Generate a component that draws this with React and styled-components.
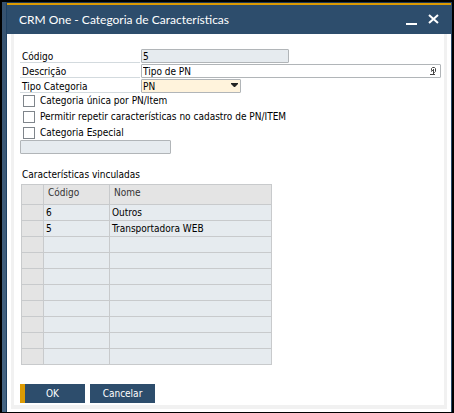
import React, { useState } from "react";
import styled, { createGlobalStyle } from "styled-components";

const GlobalStyle = createGlobalStyle`
  * {
    box-sizing: border-box;
  }

  body {
    margin: 0;
    background: #000;
    color: #000;
    font-family: "DejaVu Sans Condensed", "DejaVu Sans", sans-serif;
    font-size: 10px;
    line-height: 16px;
  }

  button,
  input,
  select {
    font: inherit;
    color: inherit;
  }
`;

const Window = styled.div`
  display: flex;
  min-height: 100vh;
  padding: 2px;
`;

const LeftEdge = styled.div`
  width: 5px;
  background: linear-gradient(#36526f, #456482);
  border-right: 1px solid #1f4163;
`;

const Frame = styled.div`
  flex: 1;
  min-width: 0;
  display: flex;
  flex-direction: column;
  border-top: 1px solid #1f3b57;
  border-right: 1px solid #2b4b6b;
`;

const TitleBar = styled.header`
  display: flex;
  align-items: center;
  justify-content: space-between;
  height: 31px;
  padding: 0 12px;
  background: #2d4d6c;
  border-top: 2px solid #dc9b04;
`;

const Title = styled.h1`
  margin: 0;
  color: #fff;
  font-family: Lato, sans-serif;
  font-size: 12px;
  font-weight: 400;
  line-height: 16px;
`;

const WindowButtons = styled.div`
  display: flex;
  gap: 10px;
`;

const IconButton = styled.button`
  display: flex;
  padding: 0;
  border: none;
  background: transparent;
  color: #fff;
`;

const Body = styled.main`
  flex: 1;
  padding: 0 4px 3px;
  background: #fff;
  display: flex;
`;

const Form = styled.form`
  flex: 1;
  min-width: 0;
  padding: 15px 3px 2px 6px;
  border: solid #f1f1f1;
  border-width: 0 3px 4px;
`;

const Fields = styled.div`
  display: flex;
  flex-direction: column;
  gap: 1px;
`;

const FieldRow = styled.div`
  display: flex;
  gap: 1px;
`;

const FieldLabel = styled.label`
  width: 120px;
  height: 14px;
  padding-left: 2px;
  border-bottom: 1px solid #d3dade;
`;

const TextInput = styled.input`
  width: ${(props) => props.$width || "100%"};
  height: 14px;
  padding: 1px 1px 0;
  border: 1px solid #b1b5b8;
  border-radius: 1px;
  background: ${(props) => (props.readOnly ? "#e6ebef" : "#fff")};
  outline: none;
`;

const InputWrapper = styled.div`
  flex: 1;
  display: flex;
  align-items: center;
  height: 14px;
  padding-right: 3px;
  border: 1px solid #b1b5b8;
  border-radius: 1px;

  ${TextInput} {
    flex: 1;
    min-width: 0;
    height: 12px;
    border: none;
  }
`;

const SelectWrapper = styled.div`
  display: grid;
  align-items: center;
  width: 100px;
  height: 14px;
  border: 1px solid #b1b5b8;
  border-radius: 1px;
  background: #fff3dc;

  > * {
    grid-area: 1 / 1;
  }

  > svg {
    justify-self: end;
    margin-right: 2px;
    pointer-events: none;
  }
`;

const Select = styled.select`
  width: 100%;
  height: 12px;
  padding: 1px 1px 0;
  border: none;
  background: transparent;
  line-height: 12px;
  appearance: none;
  outline: none;
`;

const Checks = styled.div`
  display: flex;
  flex-direction: column;
  gap: 1px;
  padding: 0 3px;
`;

const CheckLabel = styled.label`
  display: flex;
  align-items: center;
  gap: 5px;
  height: 15px;
`;

const Checkbox = styled.input`
  width: 12px;
  height: 12px;
  margin: 0;
  border: 1px solid #7f858b;
  background: #fff;
  appearance: none;

  &:checked {
    background: #2d4d6c;
  }
`;

const Grid = styled.table`
  width: 251px;
  margin: 13px 0 0 1px;
  border-collapse: collapse;
  table-layout: fixed;

  caption {
    padding: 0 0 1px 1px;
    text-align: left;
  }

  th,
  td {
    height: 16px;
    padding: 1px 2px 0;
    border: 1px solid #c8cacc;
    background: #e6ebef;
    line-height: 14px;
    text-align: left;
  }

  th {
    background: #e4e4e4;
    color: #333;
    font-weight: 400;
  }

  thead th {
    height: 20px;
    padding: 0 4px 3px;
  }
`;

const Footer = styled.footer`
  display: flex;
  gap: 5px;
  margin-top: 19px;
`;

const Button = styled.button`
  width: 65px;
  height: 19px;
  padding: ${(props) => (props.$primary ? "0 5px 0 0" : "0")};
  border: none;
  border-left: ${(props) => (props.$primary ? "5px solid #dc9b04" : "none")};
  background: #2d4d6c;
  color: #fff;
`;

const records = [
  { codigo: 6, nome: "Outros" },
  { codigo: 5, nome: "Transportadora WEB" },
];
const ROW_COUNT = 10;

const options = [
  "Categoria única por PN/Item",
  "Permitir repetir características no cadastro de PN/ITEM",
  "Categoria Especial",
];

function App() {
  const [descricao, setDescricao] = useState("Tipo de PN");
  const rows = Array.from({ length: ROW_COUNT }, (_, i) => records[i] || {});

  return (
    <>
      <GlobalStyle />
      <Window>
        <LeftEdge />
        <Frame>
          <TitleBar>
            <Title>CRM One - Categoria de Características</Title>
            <WindowButtons>
              <IconButton aria-label="Minimizar">
                <svg width="13" height="12" viewBox="0 0 13 12">
                  <path d="M1 9h11v2H1z" fill="currentColor" />
                </svg>
              </IconButton>
              <IconButton aria-label="Fechar">
                <svg width="11" height="12" viewBox="0 0 11 12">
                  <path d="M1 1l9 8M10 1l-9 8" stroke="currentColor" strokeWidth="2" />
                </svg>
              </IconButton>
            </WindowButtons>
          </TitleBar>
          <Body>
            <Form onSubmit={(e) => e.preventDefault()}>
              <Fields>
                <FieldRow>
                  <FieldLabel htmlFor="codigo">Código</FieldLabel>
                  <TextInput id="codigo" $width="148px" value="5" readOnly />
                </FieldRow>
                <FieldRow>
                  <FieldLabel htmlFor="descricao">Descrição</FieldLabel>
                  <InputWrapper>
                    <TextInput
                      id="descricao"
                      value={descricao}
                      onChange={(e) => setDescricao(e.target.value)}
                    />
                    <svg width="7" height="10" viewBox="0 0 7 10" fill="none" stroke="#444">
                      <path d="M1.5 4.5v-2l1-1h2l1 1v3l-1 1h-1" />
                      <path d="M3.5 3v5M1 5.5l3-2M0 8.5h5" />
                    </svg>
                  </InputWrapper>
                </FieldRow>
                <FieldRow>
                  <FieldLabel htmlFor="tipo">Tipo Categoria</FieldLabel>
                  <SelectWrapper>
                    <Select id="tipo">
                      <option>PN</option>
                    </Select>
                    <svg width="8" height="6" viewBox="0 0 8 6">
                      <path d="M1 0h7v1L5 4H4L1 1z" fill="#222" />
                    </svg>
                  </SelectWrapper>
                </FieldRow>
              </Fields>
              <Checks>
                {options.map((option) => (
                  <CheckLabel key={option}>
                    <Checkbox type="checkbox" />
                    {option}
                  </CheckLabel>
                ))}
              </Checks>
              <FieldRow>
                <TextInput $width="151px" aria-label="Categoria Especial" readOnly />
              </FieldRow>
              <Grid>
                <caption>Características vinculadas</caption>
                <colgroup>
                  <col width="22" />
                  <col width="66" />
                  <col />
                </colgroup>
                <thead>
                  <tr>
                    <th />
                    <th>Código</th>
                    <th>Nome</th>
                  </tr>
                </thead>
                <tbody>
                  {rows.map((row, index) => (
                    <tr key={index}>
                      <th />
                      <td>{row.codigo}</td>
                      <td>{row.nome}</td>
                    </tr>
                  ))}
                </tbody>
              </Grid>
              <Footer>
                <Button type="submit" $primary>
                  OK
                </Button>
                <Button type="button">Cancelar</Button>
              </Footer>
            </Form>
          </Body>
        </Frame>
      </Window>
    </>
  );
}

export default App;
